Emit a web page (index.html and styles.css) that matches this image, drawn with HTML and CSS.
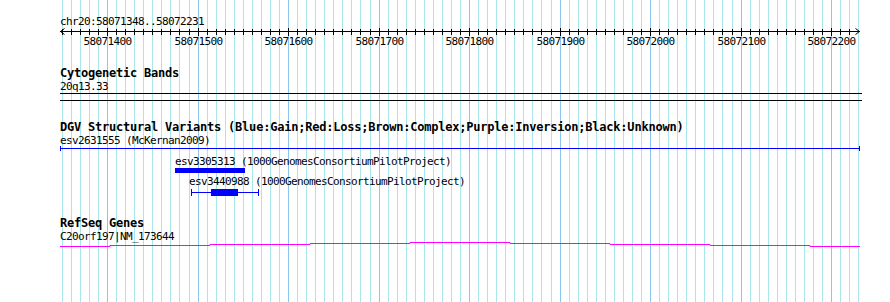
FILE: index.html
```html
<!DOCTYPE html>
<html lang="en">
<head>
<meta charset="utf-8">
<title>Genome browser – chr20:58071348..58072231</title>
<link rel="stylesheet" href="styles.css">
</head>
<body>
<div class="browser">
  <svg class="grid" width="890" height="302" aria-hidden="true">
    <path class="grid-minor" d="M62.5 0V302M71.5 0V302M80.5 0V302M89.5 0V302M98.5 0V302M116.5 0V302M125.5 0V302M134.5 0V302M143.5 0V302M152.5 0V302M161.5 0V302M170.5 0V302M179.5 0V302M189.5 0V302M207.5 0V302M216.5 0V302M225.5 0V302M234.5 0V302M243.5 0V302M252.5 0V302M261.5 0V302M270.5 0V302M279.5 0V302M297.5 0V302M306.5 0V302M315.5 0V302M324.5 0V302M333.5 0V302M342.5 0V302M351.5 0V302M360.5 0V302M370.5 0V302M388.5 0V302M397.5 0V302M406.5 0V302M415.5 0V302M424.5 0V302M433.5 0V302M442.5 0V302M451.5 0V302M460.5 0V302M478.5 0V302M487.5 0V302M496.5 0V302M505.5 0V302M514.5 0V302M523.5 0V302M532.5 0V302M541.5 0V302M551.5 0V302M569.5 0V302M578.5 0V302M587.5 0V302M596.5 0V302M605.5 0V302M614.5 0V302M623.5 0V302M632.5 0V302M641.5 0V302M659.5 0V302M668.5 0V302M677.5 0V302M686.5 0V302M695.5 0V302M704.5 0V302M713.5 0V302M722.5 0V302M732.5 0V302M750.5 0V302M759.5 0V302M768.5 0V302M777.5 0V302M786.5 0V302M795.5 0V302M804.5 0V302M813.5 0V302M822.5 0V302M840.5 0V302M849.5 0V302M858.5 0V302"/>
    <path class="grid-major" d="M107.5 0V302M198.5 0V302M288.5 0V302M379.5 0V302M469.5 0V302M560.5 0V302M650.5 0V302M741.5 0V302M831.5 0V302"/>
  </svg>

  <div class="tracks">
    <section class="ruler">
      <div class="ruler-label">chr20:58071348..58072231</div>
      <svg class="ruler-scale" width="830" height="23" aria-label="scale">
        <path class="axis" d="M0 4.5H800M0.5 4.5L4.5 1.5M0.5 4.5L4.5 7.5M799.5 4.5L795.5 1.5M799.5 4.5L795.5 7.5"/>
        <path class="ticks" d="M2.5 2v6M11.5 2v6M20.5 2v6M29.5 2v6M38.5 2v6M47.5 1v8M56.5 2v6M65.5 2v6M74.5 2v6M83.5 2v6M92.5 2v6M101.5 2v6M110.5 2v6M119.5 2v6M129.5 2v6M138.5 1v8M147.5 2v6M156.5 2v6M165.5 2v6M174.5 2v6M183.5 2v6M192.5 2v6M201.5 2v6M210.5 2v6M219.5 2v6M228.5 1v8M237.5 2v6M246.5 2v6M255.5 2v6M264.5 2v6M273.5 2v6M282.5 2v6M291.5 2v6M300.5 2v6M310.5 2v6M319.5 1v8M328.5 2v6M337.5 2v6M346.5 2v6M355.5 2v6M364.5 2v6M373.5 2v6M382.5 2v6M391.5 2v6M400.5 2v6M409.5 1v8M418.5 2v6M427.5 2v6M436.5 2v6M445.5 2v6M454.5 2v6M463.5 2v6M472.5 2v6M481.5 2v6M491.5 2v6M500.5 1v8M509.5 2v6M518.5 2v6M527.5 2v6M536.5 2v6M545.5 2v6M554.5 2v6M563.5 2v6M572.5 2v6M581.5 2v6M590.5 1v8M599.5 2v6M608.5 2v6M617.5 2v6M626.5 2v6M635.5 2v6M644.5 2v6M653.5 2v6M662.5 2v6M672.5 2v6M681.5 1v8M690.5 2v6M699.5 2v6M708.5 2v6M717.5 2v6M726.5 2v6M735.5 2v6M744.5 2v6M753.5 2v6M762.5 2v6M771.5 1v8M780.5 2v6M789.5 2v6"/>
        <g class="tick-labels">
          <text x="47.5" y="18">58071400</text>
          <text x="138.5" y="18">58071500</text>
          <text x="228.5" y="18">58071600</text>
          <text x="319.5" y="18">58071700</text>
          <text x="409.5" y="18">58071800</text>
          <text x="500.5" y="18">58071900</text>
          <text x="590.5" y="18">58072000</text>
          <text x="681.5" y="18">58072100</text>
          <text x="771.5" y="18">58072200</text>
        </g>
      </svg>
    </section>

    <section class="track track-cyto">
      <h2 class="track-title">Cytogenetic Bands</h2>
      <div class="feature-label">20q13.33</div>
      <svg class="band" width="802" height="8" aria-hidden="true">
        <path d="M0 0.5H802M0 7.5H802"/>
      </svg>
    </section>

    <section class="track track-dgv">
      <h2 class="track-title">DGV Structural Variants (Blue:Gain;Red:Loss;Brown:Complex;Purple:Inversion;Black:Unknown)</h2>
      <div class="feature-label">esv2631555 (McKernan2009)</div>
      <svg class="sv-features" width="830" height="56">
        <path class="sv-line" d="M0 4.5H800M0.5 2v5M799.5 2v5"/>
        <text class="sv-label" x="115" y="21">esv3305313 (1000GenomesConsortiumPilotProject)</text>
        <rect class="sv-block" x="115" y="24" width="70" height="5"/>
        <text class="sv-label" x="129" y="41">esv3440988 (1000GenomesConsortiumPilotProject)</text>
        <path class="sv-line" d="M131 48.5H199M131.5 45v7M198.5 45v7"/>
        <rect class="sv-block" x="151" y="45" width="27" height="7"/>
      </svg>
    </section>

    <section class="track track-refseq">
      <h2 class="track-title">RefSeq Genes</h2>
      <div class="feature-label">C20orf197|NM_173644</div>
      <svg class="gene-model" width="830" height="10" aria-hidden="true">
        <path d="M0 6.5H50V5.5H150V4.5H250V3.5H350V2.5H450V3.5H550V4.5H650V5.5H750V6.5H800"/>
      </svg>
    </section>
  </div>
</div>
</body>
</html>
```

FILE: styles.css
```css
* {
  margin: 0;
  padding: 0;
  box-sizing: border-box;
}

body {
  margin: 0;
  background: #ffffff;
}

.browser {
  position: relative;
  width: 890px;
  height: 302px;
  overflow: hidden;
  background: #ffffff;
}

svg {
  display: block;
}

.grid {
  position: absolute;
  top: 0;
  left: 0;
}

.grid-minor {
  fill: none;
  stroke: #a8e6ec;
  stroke-width: 1;
}

.grid-major {
  fill: none;
  stroke: #8cc6ee;
  stroke-width: 1;
}

.tracks {
  position: relative;
  padding-left: 60px;
  color: #000;
}

.ruler-label,
.feature-label,
.tick-labels,
.sv-label {
  font-family: "DejaVu Sans Mono", "Liberation Mono", monospace;
  font-size: 11px;
  letter-spacing: -0.62px;
  white-space: nowrap;
}

.ruler-label {
  margin-top: 16px;
  line-height: 11px;
}

.feature-label {
  line-height: 13px;
}

.axis,
.ticks {
  fill: none;
  stroke: #000;
  stroke-width: 1;
}

.tick-labels text {
  fill: #000;
  text-anchor: middle;
}

.track-title {
  font-family: "DejaVu Sans Mono", "Liberation Mono", monospace;
  font-weight: bold;
  font-size: 12px;
  line-height: 13px;
  letter-spacing: -0.22px;
  white-space: nowrap;
}

.track-cyto {
  margin-top: 17px;
}

.track-dgv {
  margin-top: 20px;
}

.track-refseq {
  margin-top: 17px;
}

.band path {
  fill: none;
  stroke: #000;
  stroke-width: 1;
}

.sv-features {
  margin-top: -3px;
}

.sv-line {
  fill: none;
  stroke: #0000ff;
  stroke-width: 1;
}

.sv-block {
  fill: #0000ff;
}

.sv-label {
  fill: #000;
}

.gene-model {
  margin-top: -3px;
}

.gene-model path {
  fill: none;
  stroke: #ff00ff;
  stroke-width: 1;
}
```
